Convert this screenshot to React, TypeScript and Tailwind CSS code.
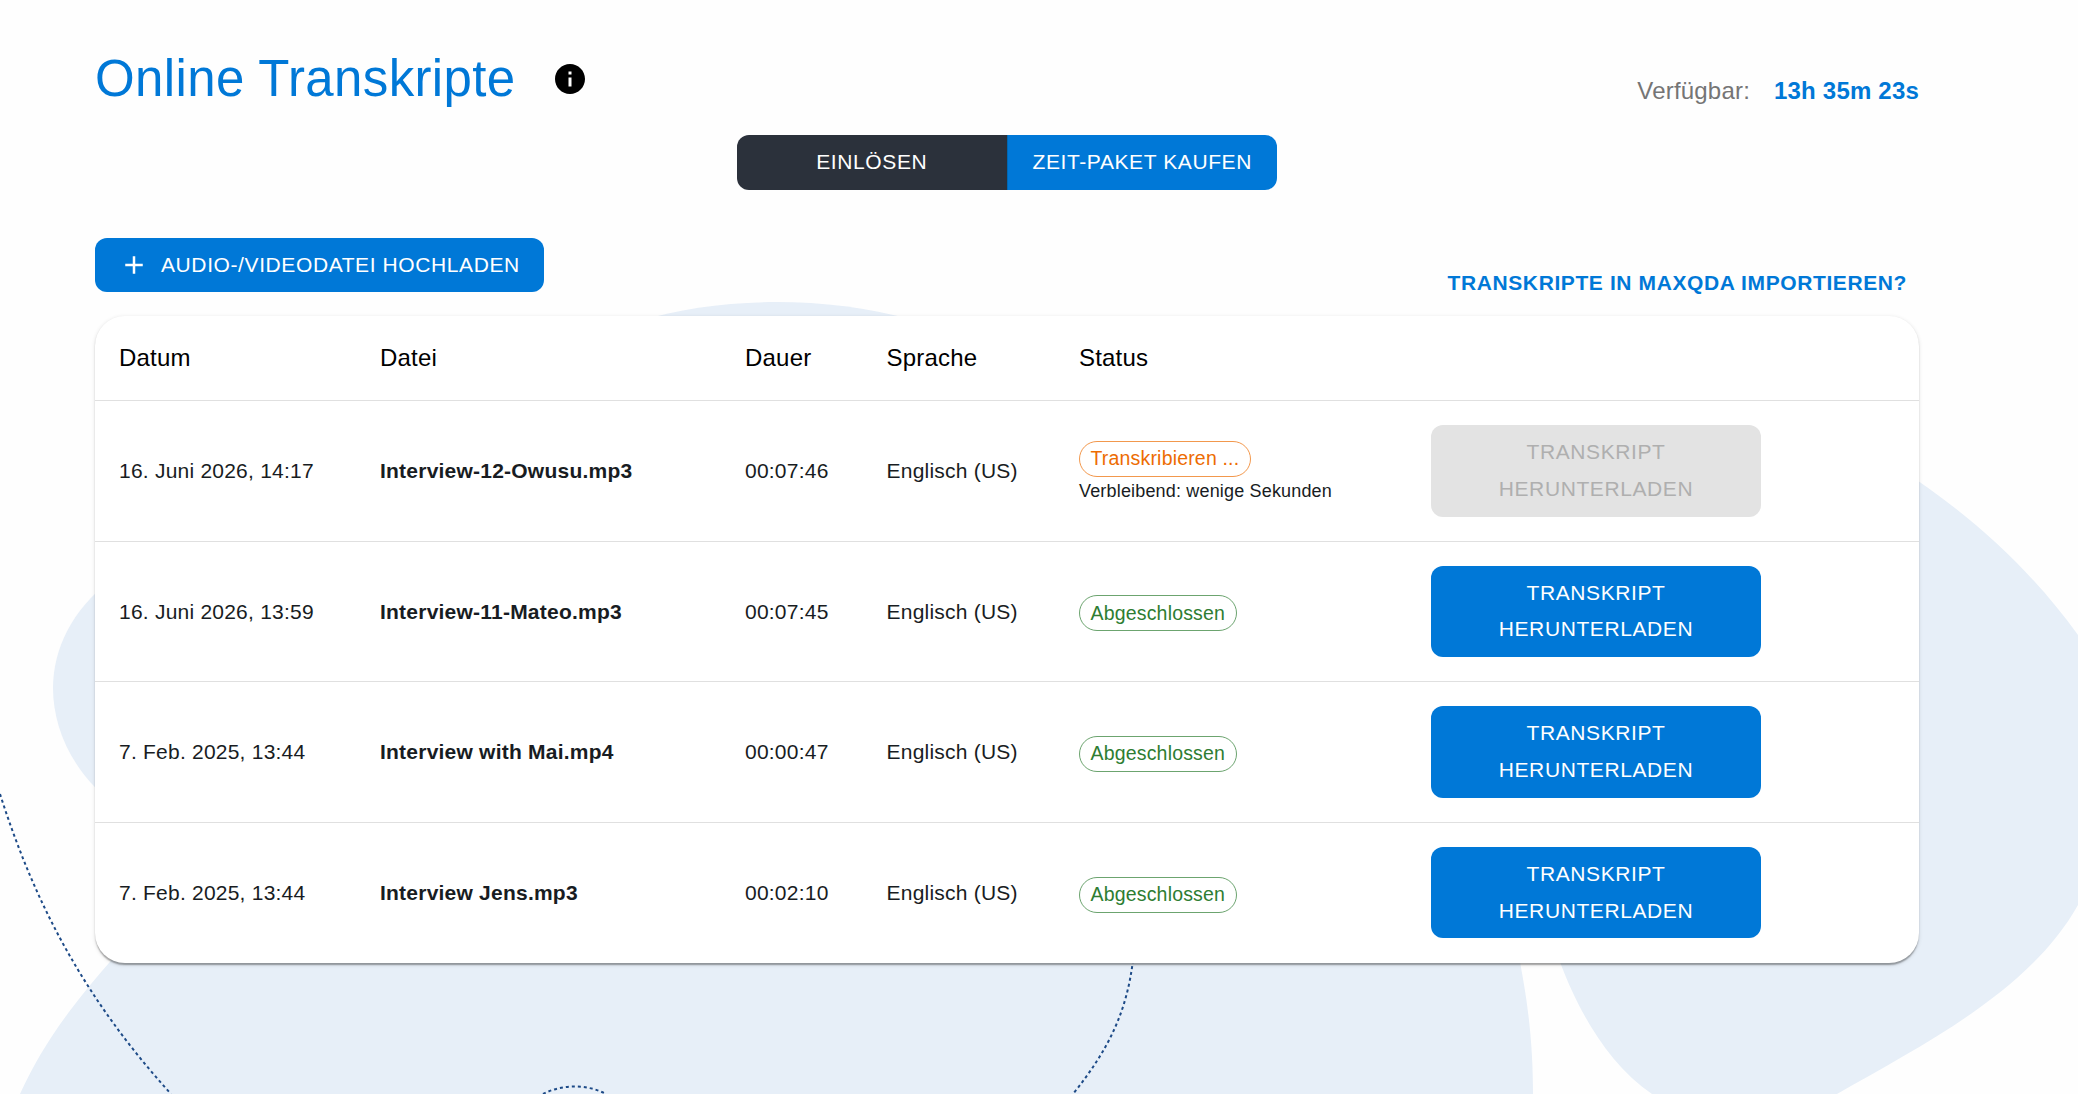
import React from "react";
import clsx from "clsx";
import { MdAdd, MdInfo } from "react-icons/md";

type Transcript = {
  id: number;
  date: string;
  file: string;
  duration: string;
  language: string;
  status: "running" | "done";
  remaining?: string;
};

const transcripts: Transcript[] = [
  {
    id: 1,
    date: "16. Juni 2026, 14:17",
    file: "Interview-12-Owusu.mp3",
    duration: "00:07:46",
    language: "Englisch (US)",
    status: "running",
    remaining: "Verbleibend: wenige Sekunden",
  },
  {
    id: 2,
    date: "16. Juni 2026, 13:59",
    file: "Interview-11-Mateo.mp3",
    duration: "00:07:45",
    language: "Englisch (US)",
    status: "done",
  },
  {
    id: 3,
    date: "7. Feb. 2025, 13:44",
    file: "Interview with Mai.mp4",
    duration: "00:00:47",
    language: "Englisch (US)",
    status: "done",
  },
  {
    id: 4,
    date: "7. Feb. 2025, 13:44",
    file: "Interview Jens.mp3",
    duration: "00:02:10",
    language: "Englisch (US)",
    status: "done",
  },
];

const columns = ["Datum", "Datei", "Dauer", "Sprache", "Status", ""];

const gridCols = "grid grid-cols-[261px_365px_141.5px_192.5px_352px_1fr] items-center";
const buttonText = "text-[21px] leading-[36.75px] tracking-[0.6px] uppercase";

const Background = () => (
  <svg
    className="absolute inset-0 h-full w-full"
    viewBox="0 0 2078 1094"
    fill="none"
    aria-hidden="true"
  >
    <g fill="#e7eff8">
      <path d="M640 321C715 297 825 295 910 319.5V340H640Z" />
      <path d="M110 581C72 610 53 649 53 688C53 728 72 770 110 801Z" />
      <path d="M20 1094C40 1050 66 1012 109 963L150 910H1509C1525 980 1533 1030 1533 1094Z" />
      <path d="M1900 469C1975 517 2035 575 2078 635V905C2030 990 1930 1041 1837 1094H1652C1605 1062 1576 1005 1560 962L1545 900H1900Z" />
    </g>
    <g stroke="#1d4a87" strokeWidth="2" strokeDasharray="3 3">
      <path d="M0 794C36 907 86 1000 171 1094" />
      <path d="M1133 960C1127 1010 1110 1048 1073 1094" />
      <path d="M543 1094C562 1084 587 1084 606 1094" />
    </g>
  </svg>
);

const StatusChip = ({ status }: { status: Transcript["status"] }) => (
  <span
    className={clsx(
      "inline-flex h-9 items-center rounded-full border px-[10.5px] text-[19.5px] tracking-[0.18px]",
      status === "running"
        ? "border-[#ed6c02]/70 text-[#ed6c02]"
        : "border-[#2e7d32]/70 text-[#2e7d32]"
    )}
  >
    {status === "running" ? "Transkribieren ..." : "Abgeschlossen"}
  </span>
);

const TranscriptRow = ({ data }: { data: Transcript }) => (
  <div
    className={clsx(
      gridCols,
      "h-[140.6px] border-b border-[#e0e0e0] text-[21px] tracking-[0.225px] text-[#181c22] last:h-[139.8px] last:border-b-0"
    )}
  >
    <div className="pl-6">{data.date}</div>
    <div className="pl-6 font-bold">{data.file}</div>
    <div className="pl-6">{data.duration}</div>
    <div className="pl-6">{data.language}</div>
    <div className="flex flex-col items-start pt-1 pl-6 tracking-normal">
      <StatusChip status={data.status} />
      {data.remaining && (
        <span className="mt-px text-lg leading-[27px] tracking-[0.17px]">
          {data.remaining}
        </span>
      )}
    </div>
    <div className="pl-6">
      <button
        disabled={data.status === "running"}
        className={clsx(
          buttonText,
          "block w-[330px] rounded-xl px-12 py-[9px]",
          data.status === "running"
            ? "bg-[#e3e3e3] text-[#afafaf]"
            : "bg-[#0078d7] text-white"
        )}
      >
        Transkript herunterladen
      </button>
    </div>
  </div>
);

const App = () => {
  return (
    <div className="relative h-[1094px] w-full overflow-hidden bg-[#fefefe] font-['Liberation_Sans',Arial,sans-serif]">
      <Background />

      <main className="relative ml-[95px] w-[1824px] pt-12">
        <header className="flex h-[87px] items-start justify-between">
          <div className="flex items-center">
            <h1 className="text-[51px] leading-[62px] tracking-[0.375px] text-[#0078d7]">
              Online Transkripte
            </h1>
            <MdInfo className="ml-9 text-black" size={36} />
          </div>
          <p className="mt-[25px] flex gap-6 text-2xl leading-9 tracking-[0.2px]">
            <span className="text-[#757575]">Verfügbar:</span>
            <span className="font-bold text-[#0078d7]">13h 35m 23s</span>
          </p>
        </header>

        <div className="mx-auto flex h-[55px] w-[540px] overflow-hidden rounded-xl text-white">
          <button className={clsx(buttonText, "flex-1 border-r border-[#0068b4] bg-[#2b313b]")}>
            Einlösen
          </button>
          <button className={clsx(buttonText, "flex-1 bg-[#0078d7]")}>
            Zeit-Paket kaufen
          </button>
        </div>

        <div className="mt-12 flex h-[78px] items-start justify-between">
          <button
            className={clsx(
              buttonText,
              "flex h-[54px] items-center rounded-xl bg-[#0078d7] px-6 text-white"
            )}
          >
            <MdAdd className="mr-3" size={30} />
            Audio-/Videodatei hochladen
          </button>
          <a className={clsx(buttonText, "mr-3 mt-[27px] font-bold text-[#0078d7]")}>
            Transkripte in MAXQDA importieren?
          </a>
        </div>

        <section className="rounded-[30px] bg-white shadow-[0_3px_1.5px_-1.5px_rgba(0,0,0,0.2),0_1.5px_1.5px_rgba(0,0,0,0.14),0_1.5px_4.5px_rgba(0,0,0,0.12)]">
          <div
            className={clsx(
              gridCols,
              "h-[85px] border-b border-[#e0e0e0] text-2xl tracking-[0.2px] text-black"
            )}
          >
            {columns.map((label) => (
              <div key={label} className="pl-6">
                {label}
              </div>
            ))}
          </div>
          <div>
            {transcripts.map((t) => (
              <TranscriptRow key={t.id} data={t} />
            ))}
          </div>
        </section>
      </main>
    </div>
  );
};

export default App;
